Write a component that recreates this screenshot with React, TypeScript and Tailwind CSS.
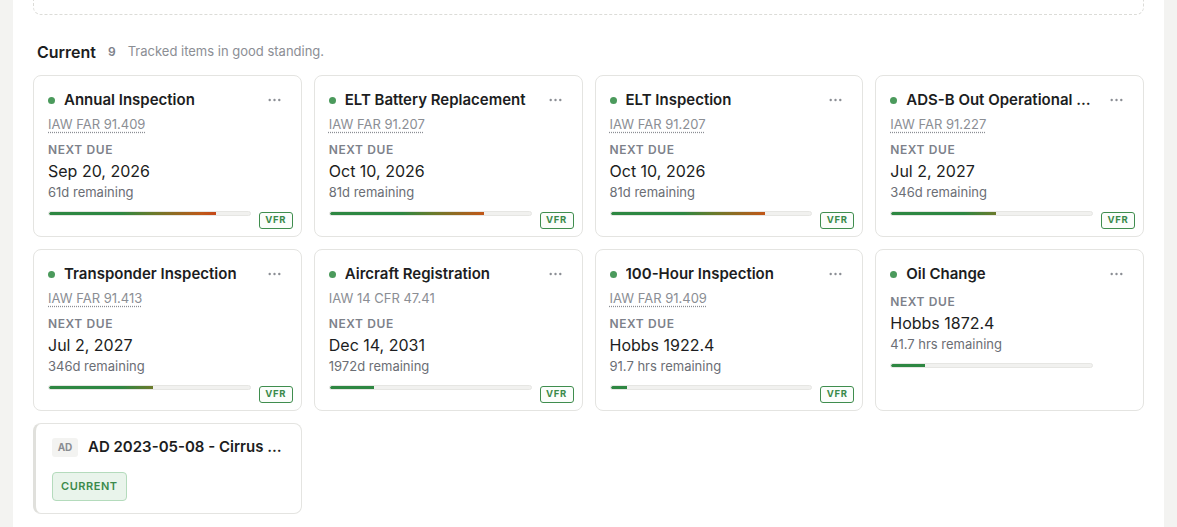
type Item = {
  title: string
  ref?: string
  refLink?: boolean
  due: string
  remaining: string
  pct: number
  vfr?: boolean
}

const items: Item[] = [
  { title: 'Annual Inspection', ref: 'IAW FAR 91.409', refLink: true, due: 'Sep 20, 2026', remaining: '61d remaining', pct: 83, vfr: true },
  { title: 'ELT Battery Replacement', ref: 'IAW FAR 91.207', refLink: true, due: 'Oct 10, 2026', remaining: '81d remaining', pct: 77, vfr: true },
  { title: 'ELT Inspection', ref: 'IAW FAR 91.207', refLink: true, due: 'Oct 10, 2026', remaining: '81d remaining', pct: 77, vfr: true },
  { title: 'ADS-B Out Operational Check', ref: 'IAW FAR 91.227', refLink: true, due: 'Jul 2, 2027', remaining: '346d remaining', pct: 52, vfr: true },
  { title: 'Transponder Inspection', ref: 'IAW FAR 91.413', refLink: true, due: 'Jul 2, 2027', remaining: '346d remaining', pct: 52, vfr: true },
  { title: 'Aircraft Registration', ref: 'IAW 14 CFR 47.41', refLink: false, due: 'Dec 14, 2031', remaining: '1972d remaining', pct: 22, vfr: true },
  { title: '100-Hour Inspection', ref: 'IAW FAR 91.409', refLink: true, due: 'Hobbs 1922.4', remaining: '91.7 hrs remaining', pct: 8, vfr: true },
  { title: 'Oil Change', due: 'Hobbs 1872.4', remaining: '41.7 hrs remaining', pct: 17 },
]

function MoreDots() {
  return (
    <svg width="13" height="4" viewBox="0 0 13 4" className="shrink-0">
      <circle cx="1.7" cy="2" r="1.2" fill="#8b8e94" />
      <circle cx="6.5" cy="2" r="1.2" fill="#8b8e94" />
      <circle cx="11.3" cy="2" r="1.2" fill="#8b8e94" />
    </svg>
  )
}

function ProgressBar({ pct }: { pct: number }) {
  return (
    <div className="mt-[10px] mr-[30px] h-[5px] rounded-full border border-[#e6e6e3] bg-[#f1f1ef] overflow-hidden">
      <div
        className="h-full rounded-l-full bg-[linear-gradient(90deg,#2e8742_0%,#2e8742_36%,#6b7a2b_52%,#bf5818_76%,#c8401a_86%,#c8401a_100%)]"
        style={{ width: `${pct}%`, backgroundSize: `${10000 / pct}% 100%` }}
      />
    </div>
  )
}

function TrackedCard({ item }: { item: Item }) {
  return (
    <div className="relative rounded-[8px] border border-[#e4e4e1] bg-white pl-[14px] pr-[20px] pt-[13px] pb-[20px]">
      <div className="flex h-[22px] items-center">
        <span className="mr-[9px] h-[7px] w-[7px] shrink-0 rounded-full bg-[#4b9a5c]" />
        <span className="min-w-0 flex-1 truncate text-[15px] font-semibold text-[#1c1d21]">{item.title}</span>
        <span className="ml-3">
          <MoreDots />
        </span>
      </div>
      {item.ref && (
        <div className="mt-[4px] text-[13px] leading-[18px] text-[#8b8e94]">
          <span className={item.refLink ? 'underline decoration-dotted decoration-[#8b8e94] underline-offset-[3px]' : ''}>
            {item.ref}
          </span>
        </div>
      )}
      <div className="mt-[9px] text-[12px] leading-[16px] font-semibold uppercase tracking-[0.05em] text-[#7d818a]">Next Due</div>
      <div className="mt-[2px] text-[16px] leading-[22px] text-[#1c1d21]">{item.due}</div>
      <div className="mt-[1px] text-[13px] leading-[18px] text-[#6b6e75]">{item.remaining}</div>
      <ProgressBar pct={item.pct} />
      {item.vfr && (
        <span className="absolute right-[8px] bottom-[7px] flex h-[17px] w-[34px] items-center justify-center rounded-[3px] border border-[#3f8d4e] bg-[#fbfdfb] text-[9.5px] font-bold tracking-[0.08em] text-[#3a8a4a]">
          VFR
        </span>
      )}
    </div>
  )
}

function AdCard() {
  return (
    <div className="rounded-[8px] border border-l-[3px] border-[#e4e4e1] border-l-[#e0e0dc] bg-white pl-[16px] pr-[17px] pt-[14px] pb-[12px]">
      <div className="flex h-[19px] items-center">
        <span className="flex h-[19px] w-[26px] shrink-0 items-center justify-center rounded-[3px] bg-[#f3f3f1] text-[10px] font-bold text-[#8a8d92]">
          AD
        </span>
        <span className="ml-[10px] min-w-0 flex-1 truncate text-[15px] font-semibold text-[#1c1d21]">
          AD 2023-05-08 - Cirrus Design Corporation Airplanes
        </span>
      </div>
      <div className="mt-[15px] flex h-[29px] w-fit items-center rounded-[4px] border border-[#b4dbbc] bg-[#e9f4eb] px-[8px] text-[11px] font-semibold tracking-[0.05em] text-[#3c8a4b]">
        CURRENT
      </div>
    </div>
  )
}

export default function App() {
  return (
    <div className="flex h-screen overflow-hidden bg-[#f3f3f1] px-[13px] font-['Inter','Liberation_Sans',sans-serif]">
      <main className="flex-1 bg-white px-[20px]">
        <div className="h-[15px] rounded-b-[8px] border-x border-b border-dashed border-[#dcdcd8]" />

        <section className="mt-[26px]">
          <div className="flex h-[22px] items-center px-[4px]">
            <h2 className="text-[16px] font-semibold text-[#1c1d21]">Current</h2>
            <span className="ml-[12px] text-[12px] font-semibold text-[#7d818a]">9</span>
            <span className="ml-[12px] text-[13px] text-[#8b8e94]">Tracked items in good standing.</span>
          </div>

          <div className="mt-[12px] grid grid-cols-4 gap-[12px]">
            {items.map((item) => (
              <TrackedCard key={item.title} item={item} />
            ))}
            <AdCard />
          </div>
        </section>
      </main>
    </div>
  )
}
